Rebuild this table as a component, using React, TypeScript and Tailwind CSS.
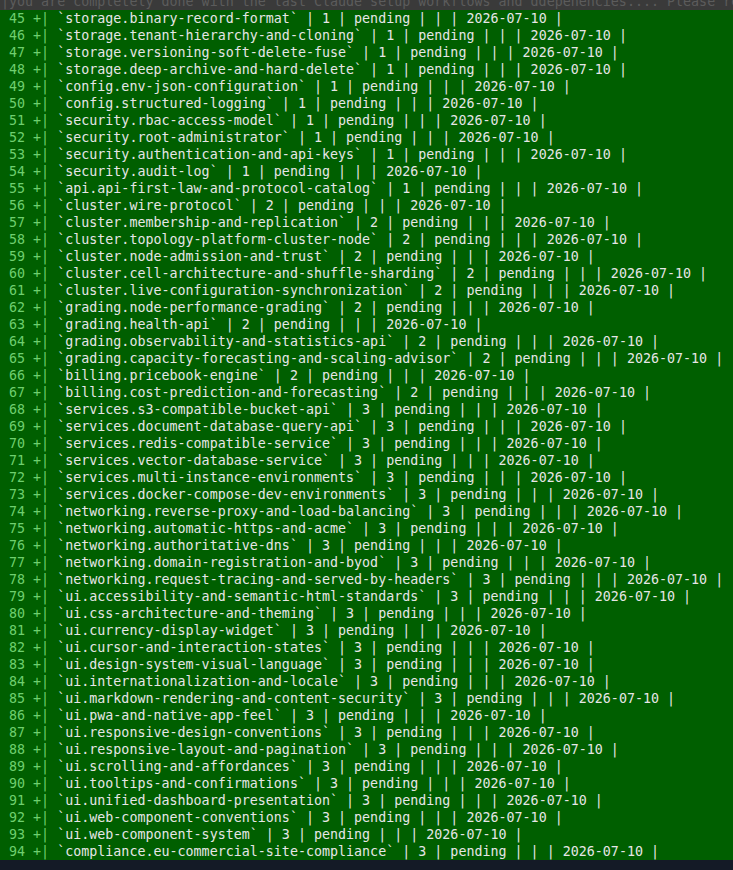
import React from 'react';

const rows: [string, number][] = [
  ['storage.binary-record-format', 1],
  ['storage.tenant-hierarchy-and-cloning', 1],
  ['storage.versioning-soft-delete-fuse', 1],
  ['storage.deep-archive-and-hard-delete', 1],
  ['config.env-json-configuration', 1],
  ['config.structured-logging', 1],
  ['security.rbac-access-model', 1],
  ['security.root-administrator', 1],
  ['security.authentication-and-api-keys', 1],
  ['security.audit-log', 1],
  ['api.api-first-law-and-protocol-catalog', 1],
  ['cluster.wire-protocol', 2],
  ['cluster.membership-and-replication', 2],
  ['cluster.topology-platform-cluster-node', 2],
  ['cluster.node-admission-and-trust', 2],
  ['cluster.cell-architecture-and-shuffle-sharding', 2],
  ['cluster.live-configuration-synchronization', 2],
  ['grading.node-performance-grading', 2],
  ['grading.health-api', 2],
  ['grading.observability-and-statistics-api', 2],
  ['grading.capacity-forecasting-and-scaling-advisor', 2],
  ['billing.pricebook-engine', 2],
  ['billing.cost-prediction-and-forecasting', 2],
  ['services.s3-compatible-bucket-api', 3],
  ['services.document-database-query-api', 3],
  ['services.redis-compatible-service', 3],
  ['services.vector-database-service', 3],
  ['services.multi-instance-environments', 3],
  ['services.docker-compose-dev-environments', 3],
  ['networking.reverse-proxy-and-load-balancing', 3],
  ['networking.automatic-https-and-acme', 3],
  ['networking.authoritative-dns', 3],
  ['networking.domain-registration-and-byod', 3],
  ['networking.request-tracing-and-served-by-headers', 3],
  ['ui.accessibility-and-semantic-html-standards', 3],
  ['ui.css-architecture-and-theming', 3],
  ['ui.currency-display-widget', 3],
  ['ui.cursor-and-interaction-states', 3],
  ['ui.design-system-visual-language', 3],
  ['ui.internationalization-and-locale', 3],
  ['ui.markdown-rendering-and-content-security', 3],
  ['ui.pwa-and-native-app-feel', 3],
  ['ui.responsive-design-conventions', 3],
  ['ui.responsive-layout-and-pagination', 3],
  ['ui.scrolling-and-affordances', 3],
  ['ui.tooltips-and-confirmations', 3],
  ['ui.unified-dashboard-presentation', 3],
  ['ui.web-component-conventions', 3],
  ['ui.web-component-system', 3],
  ['compliance.eu-commercial-site-compliance', 3],
];

const App: React.FC = () => {
  return (
    <div className="w-[733px] h-[870px] overflow-hidden flex flex-col bg-[#141a26] font-['DejaVu_Sans_Mono',monospace] text-[13.33px] leading-[17px] whitespace-pre">
      {/* previous line, scrolled mostly out of view */}
      <div className="h-[10px] shrink-0 overflow-hidden flex flex-col justify-end bg-[#3a3a3a] text-[#5c5c5c] pl-px">
        <div className="h-[17px] shrink-0">
          |you are completely done with the last Claude setup workflows and ddepenencies.... Please re
        </div>
      </div>
      <div className="bg-[#005f00] shrink-0 pl-px">
        {rows.map(([name, phase], i) => (
          <div key={name} className="h-[17px] text-[#e6e6e6]">
            <span className="text-[#6fcf6f]">{` ${45 + i} +|`}</span>
            {` \`${name}\` | ${phase} | pending | | | 2026-07-10 |`}
          </div>
        ))}
      </div>
      <div className="flex-1 bg-[#141a26]" />
    </div>
  );
};

export default App;
